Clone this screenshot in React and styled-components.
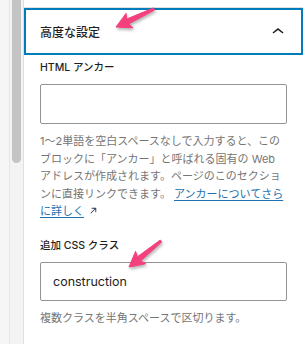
import React from 'react'
import styled, { createGlobalStyle } from 'styled-components'

const GlobalStyle = createGlobalStyle`
  html, body {
    margin: 0;
    padding: 0;
    background: #fff;
  }
  body {
    font-family: "Inter", "Noto Sans CJK JP", sans-serif;
    color: #1e1e1e;
  }
`

const Page = styled.div`
  position: relative;
  display: flex;
  width: 303px;
  height: 344px;
  overflow: hidden;
  background: #fff;
`

const Gutter = styled.div`
  width: 23px;
  flex-shrink: 0;
  display: flex;
  background: #f6f6f6;
`

const GutterEdge = styled.div`
  width: 9px;
  border-right: 1px solid #e6e6e6;
`

const Track = styled.div`
  flex: 1;
  background: #f3f3f3;
  padding: 0 2px;
`

const Thumb = styled.div`
  width: 9px;
  height: 163px;
  background: #c4c4c4;
  border-radius: 0 0 5px 5px;
`

const Sidebar = styled.div`
  flex: 1;
  border-left: 1px solid #e0e0e0;
  display: flex;
  flex-direction: column;
`

const PrevPanel = styled.div`
  height: 7px;
  border-bottom: 1px solid #e0e0e0;
`

const Toggle = styled.button`
  display: flex;
  align-items: center;
  justify-content: space-between;
  height: 47px;
  padding: 0 13px 0 16px;
  border: none;
  background: #fff;
  box-shadow: inset 0 0 0 2px #007cba;
  font-family: inherit;
  font-size: 12px;
  font-weight: 500;
  color: #1e1e1e;
  cursor: pointer;
`

const Body = styled.div`
  padding: 6px 16px 0 16px;
  display: flex;
  flex-direction: column;
`

const Field = styled.div`
  display: flex;
  flex-direction: column;
  margin-bottom: ${(p) => p.gap || 0}px;
`

const Label = styled.label`
  font-size: 10.5px;
  font-weight: 500;
  line-height: 14px;
  margin-bottom: ${(p) => p.gap}px;
  color: #1e1e1e;
`

const Input = styled.div`
  box-sizing: border-box;
  height: ${(p) => p.h}px;
  border: 1px solid #949494;
  border-radius: 2px;
  padding: 0 12px;
  display: flex;
  align-items: center;
  font-family: "Inter", sans-serif;
  font-size: 12.5px;
  color: #1e1e1e;
`

const Help = styled.p`
  margin: 9px 0 0 0;
  font-size: 11px;
  line-height: 17.6px;
  color: #757575;
  word-break: break-all;
`

const Link = styled.a`
  color: #2271b1;
  text-decoration: underline;
  text-underline-offset: 2px;
`

const External = styled.svg`
  margin-left: 4px;
  vertical-align: -1px;
`

const Marker = styled.svg`
  position: absolute;
  left: 0;
  top: 0;
  overflow: visible;
  filter: drop-shadow(1px 2px 1.5px rgba(0, 0, 0, 0.3));
`

function Arrow({ x1, y1, x2, y2 }) {
  const dx = x2 - x1
  const dy = y2 - y1
  const len = Math.hypot(dx, dy)
  const ux = dx / len
  const uy = dy / len
  const nx = -uy
  const ny = ux
  const headLen = 13
  const headW = 8
  const bx = x2 - ux * headLen
  const by = y2 - uy * headLen
  const pts = [
    [x1 + nx * 1.2, y1 + ny * 1.2],
    [bx + nx * 2.6, by + ny * 2.6],
    [bx + nx * headW - ux * 2, by + ny * headW - uy * 2],
    [x2, y2],
    [bx - nx * headW - ux * 2, by - ny * headW - uy * 2],
    [bx - nx * 2.6, by - ny * 2.6],
    [x1 - nx * 1.2, y1 - ny * 1.2],
  ]
  return (
    <Marker width="1" height="1">
      <polygon
        points={pts.map((p) => p.join(',')).join(' ')}
        fill="#f5407e"
        strokeLinejoin="round"
        stroke="#f5407e"
        strokeWidth="1"
      />
    </Marker>
  )
}

function App() {
  return (
    <Page>
      <GlobalStyle />
      <Gutter>
        <GutterEdge />
        <Track>
          <Thumb />
        </Track>
      </Gutter>
      <Sidebar>
        <PrevPanel />
        <Toggle>
          <span>高度な設定</span>
          <svg width="24" height="24" viewBox="0 0 24 24">
            <path d="M6.5 12.4L12 8l5.5 4.4-.9 1.2L12 10l-4.6 3.6-.9-1.2z" fill="#1e1e1e" />
          </svg>
        </Toggle>
        <Body>
          <Field gap={18}>
            <Label gap={9}>HTML アンカー</Label>
            <Input h={40} />
            <Help>
              1〜2単語を空白スペースなしで入力すると、このブロックに「アンカー」と呼ばれる固有の Web
              アドレスが作成されます。ページのこのセクションに直接リンクできます。{' '}
              <Link href="#">
                アンカーについてさらに詳しく
                <External width="11" height="11" viewBox="0 0 24 24">
                  <path d="M8 6v2h6.6L5.3 17.3l1.4 1.4L16 9.4V16h2V6z" fill="#2c3e57" />
                </External>
              </Link>
            </Help>
          </Field>
          <Field>
            <Label gap={9}>追加 CSS クラス</Label>
            <Input h={39}>construction</Input>
            <Help>複数クラスを半角スペースで区切ります。</Help>
          </Field>
        </Body>
      </Sidebar>
      <Arrow x1={154} y1={9} x2={116} y2={27} />
      <Arrow x1={161} y1={241} x2={129} y2={267} />
    </Page>
  )
}

export default App
